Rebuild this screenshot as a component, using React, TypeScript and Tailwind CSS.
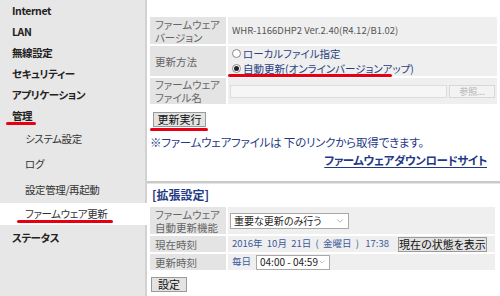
import React from 'react';
import { ChevronDown } from 'lucide-react';

const font = "font-['Noto_Sans_CJK_JP','Noto_Sans',sans-serif] [font-feature-settings:'palt']";

type NavItem = { label: string; sub?: boolean; active?: boolean; marked?: boolean; h: string };

const navItems: NavItem[] = [
  { label: 'Internet', h: 'h-[21px]' },
  { label: 'LAN', h: 'h-[21px]' },
  { label: '無線設定', h: 'h-[21px]' },
  { label: 'セキュリティー', h: 'h-[21px]' },
  { label: 'アプリケーション', h: 'h-[21px]' },
  { label: '管理', marked: true, h: 'h-[21px]' },
  { label: 'システム設定', sub: true, h: 'h-[25px]' },
  { label: 'ログ', sub: true, h: 'h-[25px]' },
  { label: '設定管理/再起動', sub: true, h: 'h-[27px]' },
  { label: 'ファームウェア更新', sub: true, active: true, marked: true, h: 'h-[22px]' },
  { label: 'ステータス', h: 'h-[25px]' },
];

const Mark = ({ className }: { className: string }) => (
  <span className={`absolute h-[3px] rounded-full bg-[#e60012] ${className}`} />
);

const Sidebar = () => (
  <aside className="w-[147px] shrink-0 bg-[#e7e7e7] shadow-[inset_-2px_0_0_#d2d2d2]">
    {navItems.map((item) => (
      <div
        key={item.label}
        className={`flex items-center ${item.h} ${item.sub ? 'pl-[25px] font-normal text-[#333]' : 'pl-[12px] font-bold text-[#222]'} ${item.active ? 'bg-white' : ''} text-[10.5px] tracking-[-0.4px]`}
      >
        <span className="relative">
          {item.label}
          {item.marked && (
            <Mark className={item.sub ? '-left-[8px] -right-[6px] top-[14px]' : '-left-[6px] -right-[4px] top-[14px]'} />
          )}
        </span>
      </div>
    ))}
  </aside>
);

const Label = ({ children }: { children: React.ReactNode }) => (
  <div className="flex flex-col justify-center bg-[#e4e4e4] px-[5px] text-[10.5px] leading-[13px] text-[#666]">{children}</div>
);

const Value = ({ children, className = '' }: { children: React.ReactNode; className?: string }) => (
  <div className={`flex items-center bg-[#efefef] pl-[2px] ${className}`}>{children}</div>
);

const Radio = ({ checked, label }: { checked?: boolean; label: string }) => (
  <div className="flex items-center gap-[2px] text-[10.5px] leading-[15px] text-[#2b3f7f]">
    <span className="flex h-[9px] w-[9px] items-center justify-center rounded-full border border-[#8a8a8a] bg-white">
      {checked && <span className="h-[5px] w-[5px] rounded-full bg-[#222]" />}
    </span>
    {label}
  </div>
);

const Btn = ({ children, className = '' }: { children: React.ReactNode; className?: string }) => (
  <button className={`flex items-center justify-center border border-[#9a9a9a] bg-[#e3e3e3] text-[11px] leading-none text-[#111] ${className}`}>
    {children}
  </button>
);

const Select = ({ value, className = '' }: { value: string; className?: string }) => (
  <div className={`flex items-center justify-between border border-[#a9a9a9] bg-white pl-[3px] pr-[3px] text-[10px] leading-none text-[#222] ${className}`}>
    <span>{value}</span>
    <ChevronDown size={10} strokeWidth={1.5} className="text-[#888]" />
  </div>
);

export default function App() {
  return (
    <div className={`flex h-[296px] w-[500px] overflow-hidden whitespace-nowrap bg-white ${font}`}>
      <Sidebar />
      <main className="flex flex-1 flex-col bg-white px-[3px] pt-[17px]">
        <div className="grid grid-cols-[76px_1fr] grid-rows-[27px_30px_26px] gap-[2px]">
          <Label>
            <span>ファームウェア</span>
            <span>バージョン</span>
          </Label>
          <Value className="pl-[4px] text-[9.5px] text-[#555]">WHR-1166DHP2 Ver.2.40(R4.12/B1.02)</Value>
          <Label>
            <span>更新方法</span>
          </Label>
          <Value className="relative flex-col !items-start justify-center pl-[4px]">
            <Radio label="ローカルファイル指定" />
            <Radio checked label="自動更新(オンラインバージョンアップ)" />
            <Mark className="left-[0px] w-[164px] top-[28px]" />
          </Value>
          <Label>
            <span>ファームウェア</span>
            <span>ファイル名</span>
          </Label>
          <Value className="gap-[2px] pr-[2px]">
            <div className="h-[13px] flex-1 border border-[#dcdcdc] bg-[#f6f6f6]" />
            <div className="flex h-[13px] w-[46px] items-center justify-center border border-[#d8d8d8] bg-[#f3f3f3] text-[9px] leading-none text-[#b0b0b0]">
              参照...
            </div>
          </Value>
        </div>

        <div className="relative mt-[8px] w-fit">
          <Btn className="ml-[3px] h-[15px] w-[53px]">更新実行</Btn>
          <Mark className="left-0 w-[58px] top-[16px]" />
        </div>

        <p className="mt-[8px] text-[11.5px] leading-[14px] tracking-[-0.2px] text-[#1f3a84]">
          ※ファームウェアファイルは 下のリンクから取得できます。
        </p>
        <div className="mt-[4px] flex justify-end pr-[10px]">
          <a className="text-[11.5px] font-bold leading-[14px] tracking-[-0.4px] text-[#1f3a84] underline underline-offset-2">
            ファームウェアダウンロードサイト
          </a>
        </div>

        <div className="-mx-[3px] mt-[14px] h-[2px] bg-[#c9c9c9] shadow-[0_1px_0_#e6e6e6]" />

        <div className="ml-[2px] mt-[5px] text-[12px] font-bold leading-[14px] text-[#1f3a84]">[拡張設定]</div>

        <div className="mr-[2px] mt-[5px] grid grid-cols-[76px_1fr] grid-rows-[27px_16px_16px] gap-[2px]">
          <Label>
            <span>ファームウェア</span>
            <span>自動更新機能</span>
          </Label>
          <Value>
            <Select value="重要な更新のみ行う" className="h-[16px] w-[119px]" />
          </Value>
          <Label>
            <span>現在時刻</span>
          </Label>
          <Value className="justify-between pl-[4px] pr-[8px] text-[9.5px] leading-none text-[#3b5b9b]">
            <span>2016年&nbsp;&nbsp;10月&nbsp;&nbsp;21日&nbsp;&nbsp;(&nbsp;&nbsp;金曜日&nbsp;&nbsp;)&nbsp;&nbsp;&nbsp;17:38</span>
            <Btn className="h-[15px] w-[89px]">現在の状態を表示</Btn>
          </Value>
          <Label>
            <span>更新時刻</span>
          </Label>
          <Value className="gap-[5px] pl-[4px] text-[9.5px] leading-none text-[#3b5b9b]">
            <span>毎日</span>
            <Select value="04:00 - 04:59" className="h-[15px] w-[74px]" />
          </Value>
        </div>

        <Btn className="ml-[1px] mt-[7px] h-[15px] w-[36px]">設定</Btn>
      </main>
    </div>
  );
}
